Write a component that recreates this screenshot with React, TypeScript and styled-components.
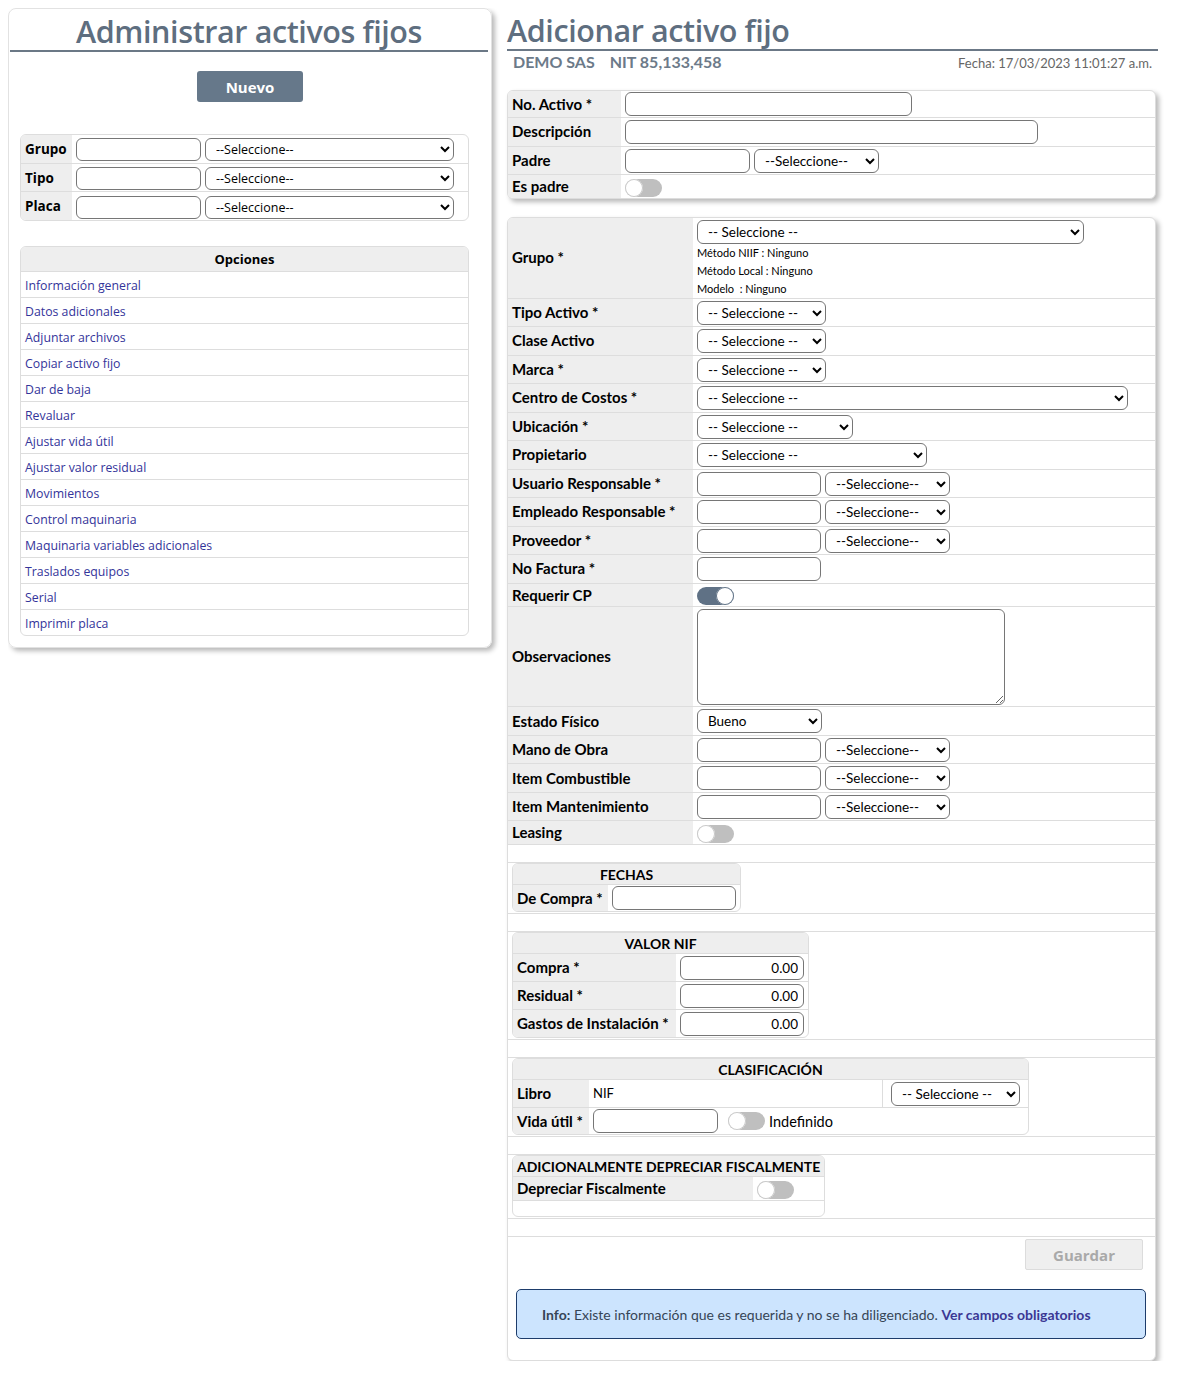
import styled, { createGlobalStyle } from "styled-components";

const GlobalStyle = createGlobalStyle`
  * { box-sizing: border-box; }
  body {
    margin: 8px;
    background: #fff;
    color: #000;
    font-family: "Open Sans", "Liberation Sans", sans-serif;
  }
`;

const Page = styled.div`
  display: flex;
  align-items: flex-start;
  gap: 15px;
`;

const LeftCard = styled.div`
  width: 484px;
  border: 1px solid #e2e2e2;
  border-radius: 8px;
  box-shadow: 3px 3px 5px rgba(0, 0, 0, 0.28);
  padding: 0 0 11px;
`;

const PageTitle = styled.h1<{ $center?: boolean }>`
  margin: 0 ${(p) => (p.$center ? "3px 0 1px" : "0")};
  padding-top: 3px;
  font-size: 30.5px;
  line-height: 38px;
  font-weight: 600;
  color: #5e6e7f;
  text-align: ${(p) => (p.$center ? "center" : "left")};
  border-bottom: 2px solid #6b7886;
  letter-spacing: -0.4px;
`;

const NuevoButton = styled.button`
  display: block;
  margin: 19px auto 0;
  width: 106px;
  height: 31px;
  border: none;
  border-radius: 3px;
  background: #66788a;
  color: #fff;
  font-family: "Open Sans", sans-serif;
  font-weight: 700;
  font-size: 15px;
`;

const BoxTable = styled.table<{ $w?: number }>`
  border-collapse: separate;
  border-spacing: 0;
  border: 1px solid #ddd;
  border-radius: 6px;
  overflow: hidden;
  width: ${(p) => (p.$w ? `${p.$w}px` : "100%")};
  td,
  th {
    padding: 0;
  }
  tr + tr > td,
  tr + tr > th {
    border-top: 1px solid #ddd;
  }
`;

const FilterTable = styled(BoxTable)`
  margin: 32px 0 0 11px;
`;

const OptionsTable = styled(BoxTable)`
  margin: 25px 0 0 11px;
`;

const FilterLabel = styled.td`
  width: 51px;
  background: #eee;
  padding: 0 4px !important;
  font-weight: 700;
  font-size: 13.5px;
`;

const FilterField = styled.td`
  padding: 2px 4px 1.5px !important;
  white-space: nowrap;
`;

const OptionsHead = styled.th`
  height: 24px;
  background: #eee;
  font-size: 13px;
  font-weight: 700;
  text-align: center;
`;

const OptionCell = styled.td`
  height: 26px;
  padding: 0 4px 2px !important;
`;

const OptionLink = styled.a`
  color: #34349a;
  font-size: 12.3px;
  text-decoration: none;
`;

const RightCol = styled.div`
  width: 651px;
`;

const CompanyBar = styled.div`
  display: flex;
  align-items: baseline;
  padding: 1px 6px 0 6px;
  font-family: Lato, sans-serif;
`;

const Company = styled.span`
  font-weight: 700;
  font-size: 16px;
  color: #6c7a89;
  margin-right: 15px;
`;

const DateText = styled.span`
  margin-left: auto;
  font-size: 13px;
  color: #666;
`;

const Card = styled.div<{ $top: number }>`
  margin-top: ${(p) => p.$top}px;
  width: 649px;
  border: 1px solid #ddd;
  border-radius: 6px;
  box-shadow: 3px 3px 5px rgba(0, 0, 0, 0.28);
  overflow: hidden;
  background: #fff;
`;

const FormTable = styled.table`
  width: 100%;
  border-collapse: collapse;
  tr + tr > td {
    border-top: 1px solid #ddd;
  }
  td {
    padding: 0;
  }
`;

const Label = styled.td<{ $w?: number }>`
  width: ${(p) => (p.$w ? `${p.$w}px` : "auto")};
  background: #eee;
  padding: 0 4px !important;
  font-family: Lato, sans-serif;
  font-weight: 700;
  font-size: 15px;
  line-height: 17px;
  white-space: nowrap;
`;

const Field = styled.td<{ $pad?: string }>`
  padding: ${(p) => p.$pad ?? "2px 4px 1.5px"} !important;
  font-family: Lato, sans-serif;
  font-size: 13px;
  line-height: 17px;
  white-space: nowrap;
  vertical-align: middle;
`;

const SpacerCell = styled.td<{ $h?: number }>`
  height: ${(p) => p.$h ?? 18}px;
`;

const WideCell = styled.td`
  padding: 0 4px 1px !important;
`;

const TextInput = styled.input<{ $w: number; $right?: boolean }>`
  width: ${(p) => p.$w}px;
  height: 24px;
  border: 1px solid #767676;
  border-radius: 6px;
  padding: 0 5px;
  font-family: Lato, sans-serif;
  font-size: 13.5px;
  text-align: ${(p) => (p.$right ? "right" : "left")};
  vertical-align: middle;
`;

const Select = styled.select<{ $w: number }>`
  width: ${(p) => p.$w}px;
  height: 24px;
  border: 1px solid #767676;
  border-radius: 6px;
  padding: 0 6px;
  background: #fff;
  color: #000;
  font-family: Lato, sans-serif;
  font-size: 13.5px;
  vertical-align: middle;
`;

const FilterSelect = styled(Select)`
  font-family: "Open Sans", sans-serif;
  font-size: 12.5px;
`;

const Gap = styled.span<{ $w?: number }>`
  display: inline-block;
  width: ${(p) => p.$w ?? 4}px;
`;

const Toggle = styled.span<{ $on?: boolean }>`
  display: inline-block;
  position: relative;
  width: 37px;
  height: 18px;
  border-radius: 9px;
  background: ${(p) => (p.$on ? "#5f7185" : "#bfbfbf")};
  vertical-align: middle;
  &::after {
    content: "";
    position: absolute;
    top: 0;
    left: ${(p) => (p.$on ? "19px" : "0")};
    width: 18px;
    height: 18px;
    border-radius: 50%;
    background: #fff;
    box-shadow: inset 0 0 0 1px ${(p) => (p.$on ? "#5f7185" : "#c8c8c8")};
  }
`;

const ToggleField = styled(Field)`
  padding: 2px 4px 1px !important;
  line-height: 18px;
`;

const InfoLine = styled.div`
  font-family: Lato, sans-serif;
  font-size: 11px;
  line-height: 18px;
`;

const TextArea = styled.textarea`
  display: block;
  width: 308px;
  height: 96px;
  border: 1px solid #767676;
  border-radius: 6px;
  resize: both;
`;

const SubHead = styled.th<{ $left?: boolean }>`
  height: 20px;
  background: #eee;
  font-family: Lato, sans-serif;
  font-weight: 700;
  font-size: 14px;
  line-height: 17px;
  text-align: ${(p) => (p.$left ? "left" : "center")};
  padding: 0 4px !important;
  white-space: nowrap;
`;

const SubLabel = styled(Label)`
  height: 27px;
`;

const SplitField = styled(Field)`
  border-left: 1px solid #ddd;
  text-align: center;
`;

const ToggleText = styled.span`
  margin-left: 4px;
  font-size: 14.5px;
  vertical-align: middle;
`;

const Footer = styled.div`
  border-top: 1px solid #ddd;
  padding: 2px 12px 0 0;
  display: flex;
  flex-direction: column;
  align-items: flex-end;
`;

const SaveButton = styled.button`
  width: 118px;
  height: 31px;
  background: #efefef;
  border: 1px solid #dcdcdc;
  border-radius: 2px;
  color: #a9a9a9;
  font-family: "Open Sans", sans-serif;
  font-weight: 700;
  font-size: 15px;
`;

const InfoBox = styled.div`
  align-self: stretch;
  margin: 19px -3px 21px 8px;
  height: 50px;
  display: flex;
  align-items: center;
  padding-left: 25px;
  background: #cce4fe;
  border: 1px solid #1d3c6b;
  border-radius: 5px;
  font-family: Lato, sans-serif;
  font-size: 14px;
  color: #364556;
  white-space: pre;
`;

const InfoStrong = styled.b``;

const InfoLink = styled.a`
  color: #3b3794;
  font-weight: 700;
  text-decoration: none;
`;

const options = [
  "Información general",
  "Datos adicionales",
  "Adjuntar archivos",
  "Copiar activo fijo",
  "Dar de baja",
  "Revaluar",
  "Ajustar vida útil",
  "Ajustar valor residual",
  "Movimientos",
  "Control maquinaria",
  "Maquinaria variables adicionales",
  "Traslados equipos",
  "Serial",
  "Imprimir placa",
];

const LookupField = () => (
  <Field>
    <TextInput $w={124} />
    <Gap />
    <Select $w={125}>
      <option>--Seleccione--</option>
    </Select>
  </Field>
);

const SelectField = ({ w, text = "-- Seleccione --" }: { w: number; text?: string }) => (
  <Field>
    <Select $w={w}>
      <option>{text}</option>
    </Select>
  </Field>
);

const L = 185;

export default function App() {
  return (
    <>
      <GlobalStyle />
      <Page>
        <LeftCard>
          <PageTitle $center>Administrar activos fijos</PageTitle>
          <NuevoButton>Nuevo</NuevoButton>
          <FilterTable $w={449}>
            <tbody>
              {["Grupo", "Tipo", "Placa"].map((name) => (
                <tr key={name}>
                  <FilterLabel>{name}</FilterLabel>
                  <FilterField>
                    <TextInput $w={125} style={{ height: 23 }} />
                    <Gap />
                    <FilterSelect $w={249} style={{ height: 23 }}>
                      <option>--Seleccione--</option>
                    </FilterSelect>
                  </FilterField>
                </tr>
              ))}
            </tbody>
          </FilterTable>
          <OptionsTable $w={449}>
            <tbody>
              <tr>
                <OptionsHead>Opciones</OptionsHead>
              </tr>
              {options.map((o) => (
                <tr key={o}>
                  <OptionCell>
                    <OptionLink href="#">{o}</OptionLink>
                  </OptionCell>
                </tr>
              ))}
            </tbody>
          </OptionsTable>
        </LeftCard>

        <RightCol>
          <PageTitle>Adicionar activo fijo</PageTitle>
          <CompanyBar>
            <Company>DEMO SAS</Company>
            <Company>NIT 85,133,458</Company>
            <DateText>Fecha: 17/03/2023 11:01:27 a.m.</DateText>
          </CompanyBar>

          <Card $top={19}>
            <FormTable>
              <tbody>
                <tr>
                  <Label $w={113}>No. Activo *</Label>
                  <Field $pad="1px 4px 1px">
                    <TextInput $w={287} />
                  </Field>
                </tr>
                <tr>
                  <Label>Descripción</Label>
                  <Field>
                    <TextInput $w={413} />
                  </Field>
                </tr>
                <tr>
                  <Label>Padre</Label>
                  <Field>
                    <TextInput $w={125} />
                    <Gap />
                    <Select $w={125}>
                      <option>--Seleccione--</option>
                    </Select>
                  </Field>
                </tr>
                <tr>
                  <Label>Es padre</Label>
                  <ToggleField $pad="3px 4px 2px">
                    <Toggle />
                  </ToggleField>
                </tr>
              </tbody>
            </FormTable>
          </Card>

          <Card $top={18}>
            <FormTable>
              <tbody>
                <tr>
                  <Label $w={L}>Grupo *</Label>
                  <Field $pad="2px 4px 0">
                    <Select $w={387}>
                      <option>-- Seleccione --</option>
                    </Select>
                    <InfoLine>Método NIIF : Ninguno</InfoLine>
                    <InfoLine>Método Local : Ninguno</InfoLine>
                    <InfoLine>Modelo &nbsp;: Ninguno</InfoLine>
                  </Field>
                </tr>
                <tr>
                  <Label>Tipo Activo *</Label>
                  <SelectField w={129} />
                </tr>
                <tr>
                  <Label>Clase Activo</Label>
                  <SelectField w={129} />
                </tr>
                <tr>
                  <Label>Marca *</Label>
                  <SelectField w={129} />
                </tr>
                <tr>
                  <Label>Centro de Costos *</Label>
                  <SelectField w={431} />
                </tr>
                <tr>
                  <Label>Ubicación *</Label>
                  <SelectField w={156} />
                </tr>
                <tr>
                  <Label>Propietario</Label>
                  <SelectField w={230} />
                </tr>
                <tr>
                  <Label>Usuario Responsable *</Label>
                  <LookupField />
                </tr>
                <tr>
                  <Label>Empleado Responsable *</Label>
                  <LookupField />
                </tr>
                <tr>
                  <Label>Proveedor *</Label>
                  <LookupField />
                </tr>
                <tr>
                  <Label>No Factura *</Label>
                  <Field>
                    <TextInput $w={124} />
                  </Field>
                </tr>
                <tr>
                  <Label>Requerir CP</Label>
                  <ToggleField $pad="2px 4px 0">
                    <Toggle $on />
                  </ToggleField>
                </tr>
                <tr>
                  <Label>Observaciones</Label>
                  <Field $pad="2px 4px 1px">
                    <TextArea />
                  </Field>
                </tr>
                <tr>
                  <Label>Estado Físico</Label>
                  <SelectField w={125} text="Bueno" />
                </tr>
                <tr>
                  <Label>Mano de Obra</Label>
                  <LookupField />
                </tr>
                <tr>
                  <Label>Item Combustible</Label>
                  <LookupField />
                </tr>
                <tr>
                  <Label>Item Mantenimiento</Label>
                  <LookupField />
                </tr>
                <tr>
                  <Label>Leasing</Label>
                  <ToggleField>
                    <Toggle />
                  </ToggleField>
                </tr>
                <tr>
                  <SpacerCell colSpan={2} />
                </tr>
                <tr>
                  <WideCell colSpan={2}>
                    <BoxTable $w={229}>
                      <tbody>
                        <tr>
                          <SubHead colSpan={2}>FECHAS</SubHead>
                        </tr>
                        <tr>
                          <SubLabel $w={96}>De Compra *</SubLabel>
                          <Field $pad="1px 4px 1px">
                            <TextInput $w={124} />
                          </Field>
                        </tr>
                      </tbody>
                    </BoxTable>
                  </WideCell>
                </tr>
                <tr>
                  <SpacerCell colSpan={2} />
                </tr>
                <tr>
                  <WideCell colSpan={2}>
                    <BoxTable $w={297}>
                      <tbody>
                        <tr>
                          <SubHead colSpan={2}>VALOR NIF</SubHead>
                        </tr>
                        {["Compra *", "Residual *", "Gastos de Instalación *"].map((n) => (
                          <tr key={n}>
                            <SubLabel $w={164}>{n}</SubLabel>
                            <Field $pad="1.5px 4px 1.5px">
                              <TextInput $w={124} $right defaultValue="0.00" />
                            </Field>
                          </tr>
                        ))}
                      </tbody>
                    </BoxTable>
                  </WideCell>
                </tr>
                <tr>
                  <SpacerCell colSpan={2} />
                </tr>
                <tr>
                  <WideCell colSpan={2}>
                    <BoxTable $w={517}>
                      <tbody>
                        <tr>
                          <SubHead colSpan={3}>CLASIFICACIÓN</SubHead>
                        </tr>
                        <tr>
                          <SubLabel $w={76}>Libro</SubLabel>
                          <Field style={{ width: 293 }}>NIF</Field>
                          <SplitField $pad="1.5px 4px 1.5px">
                            <Select $w={129}>
                              <option>-- Seleccione --</option>
                            </Select>
                          </SplitField>
                        </tr>
                        <tr>
                          <SubLabel>Vida útil *</SubLabel>
                          <Field colSpan={2} $pad="1px 4px 1px">
                            <TextInput $w={125} />
                            <Gap $w={10} />
                            <Toggle />
                            <ToggleText>Indefinido</ToggleText>
                          </Field>
                        </tr>
                      </tbody>
                    </BoxTable>
                  </WideCell>
                </tr>
                <tr>
                  <SpacerCell colSpan={2} />
                </tr>
                <tr>
                  <WideCell colSpan={2}>
                    <BoxTable $w={311}>
                      <tbody>
                        <tr>
                          <SubHead colSpan={2} $left>
                            ADICIONALMENTE DEPRECIAR FISCALMENTE
                          </SubHead>
                        </tr>
                        <tr>
                          <Label $w={240}>Depreciar Fiscalmente</Label>
                          <ToggleField $pad="2px 4px 1px">
                            <Toggle />
                          </ToggleField>
                        </tr>
                        <tr>
                          <SpacerCell colSpan={2} $h={16} />
                        </tr>
                      </tbody>
                    </BoxTable>
                  </WideCell>
                </tr>
                <tr>
                  <SpacerCell colSpan={2} />
                </tr>
              </tbody>
            </FormTable>
            <Footer>
              <SaveButton>Guardar</SaveButton>
              <InfoBox>
                <InfoStrong>Info:</InfoStrong> Existe información que es requerida y no se ha
                diligenciado. <InfoLink href="#">Ver campos obligatorios</InfoLink>
              </InfoBox>
            </Footer>
          </Card>
        </RightCol>
      </Page>
    </>
  );
}
